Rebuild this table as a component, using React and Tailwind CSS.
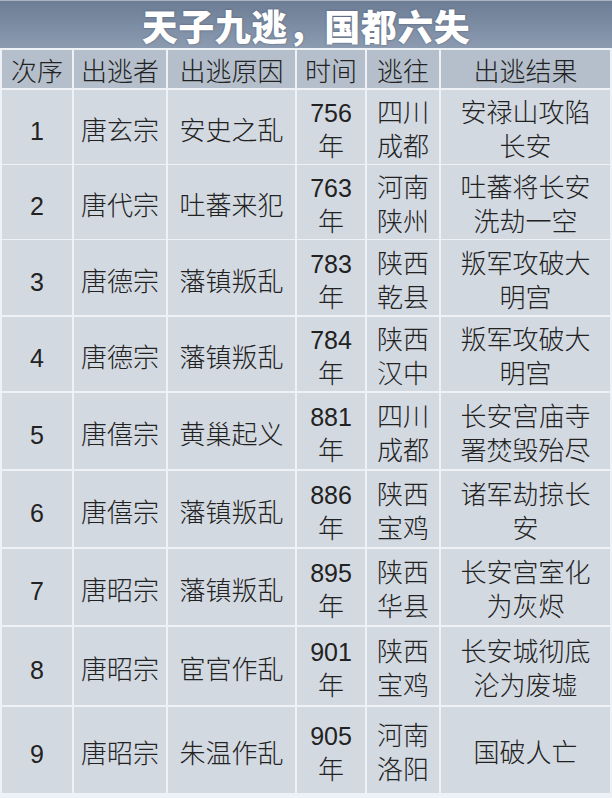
import React from "react";

const rows = [
  { n: "1", who: "唐玄宗", why: "安史之乱", year: "756", to: ["四川", "成都"], res: ["安禄山攻陷", "长安"], h: "h-[73px]" },
  { n: "2", who: "唐代宗", why: "吐蕃来犯", year: "763", to: ["河南", "陕州"], res: ["吐蕃将长安", "洗劫一空"], h: "h-[73px]" },
  { n: "3", who: "唐德宗", why: "藩镇叛乱", year: "783", to: ["陕西", "乾县"], res: ["叛军攻破大", "明宫"], h: "h-[75px]" },
  { n: "4", who: "唐德宗", why: "藩镇叛乱", year: "784", to: ["陕西", "汉中"], res: ["叛军攻破大", "明宫"], h: "h-[74px]" },
  { n: "5", who: "唐僖宗", why: "黄巢起义", year: "881", to: ["四川", "成都"], res: ["长安宫庙寺", "署焚毁殆尽"], h: "h-[76px]" },
  { n: "6", who: "唐僖宗", why: "藩镇叛乱", year: "886", to: ["陕西", "宝鸡"], res: ["诸军劫掠长", "安"], h: "h-[76px]" },
  { n: "7", who: "唐昭宗", why: "藩镇叛乱", year: "895", to: ["陕西", "华县"], res: ["长安宫室化", "为灰烬"], h: "h-[76px]" },
  { n: "8", who: "唐昭宗", why: "宦官作乱", year: "901", to: ["陕西", "宝鸡"], res: ["长安城彻底", "沦为废墟"], h: "h-[78px]" },
  { n: "9", who: "唐昭宗", why: "朱温作乱", year: "905", to: ["河南", "洛阳"], res: ["国破人亡"], h: "h-[86px]" },
];

const cols = "grid grid-cols-[70px_92px_127px_68px_72px_1fr] gap-x-[2px]";

function Cell({ children, className = "" }) {
  return (
    <div className={"flex flex-col items-center justify-center text-center leading-[34px] " + className}>
      {children}
    </div>
  );
}

export default function App() {
  return (
    <div
      className="w-[612px] h-[798px] bg-[#eef1f5] text-[#222222] text-[26px] font-light overflow-hidden"
      style={{ fontFamily: '"Liberation Sans", "Noto Sans CJK SC", sans-serif' }}
    >
      <div className="h-[48px] border-t border-[#a9b3c0] bg-gradient-to-b from-[#6c7d95] to-[#8c9bb0] flex items-center justify-center">
        <span
          className="text-white text-[36px] font-black tracking-[0.5px] leading-none [text-shadow:0_0_2px_rgba(40,50,70,0.6)]"
          style={{ fontFamily: '"Noto Sans CJK SC", sans-serif' }}
        >
          天子九逃，国都六失
        </span>
      </div>
      <div className="pl-[2px] pr-[2px] pt-[2px] flex flex-col gap-y-[2px]">
        <div className={cols + " h-[38px] bg-[#eef1f5]"}>
          {["次序", "出逃者", "出逃原因", "时间", "逃往", "出逃结果"].map((t) => (
            <Cell key={t} className="bg-[#b5bfcb] leading-none pt-[6px]">
              {t}
            </Cell>
          ))}
        </div>
        {rows.map((r) => (
          <div key={r.n} className={cols + " " + r.h}>
            <Cell className="bg-[#d3d9e1] text-[25px] pt-[8px]">{r.n}</Cell>
            <Cell className="bg-[#d3d9e1] pt-[8px]">{r.who}</Cell>
            <Cell className="bg-[#d3d9e1] pt-[8px]">{r.why}</Cell>
            <Cell className="bg-[#d3d9e1] pt-[6px]">
              <span className="text-[25px]">{r.year}</span>
              <span>年</span>
            </Cell>
            <Cell className="bg-[#d3d9e1] pt-[6px]">
              {r.to.map((t) => (
                <span key={t}>{t}</span>
              ))}
            </Cell>
            <Cell className="bg-[#d3d9e1] pt-[6px]">
              {r.res.map((t) => (
                <span key={t}>{t}</span>
              ))}
            </Cell>
          </div>
        ))}
      </div>
    </div>
  );
}
